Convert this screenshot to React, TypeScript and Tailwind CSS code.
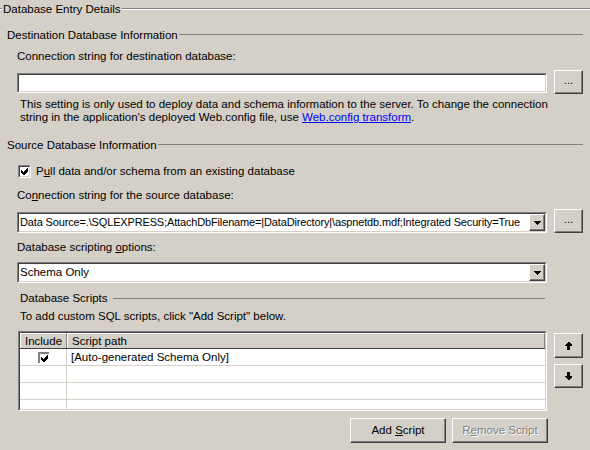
import React from "react";

const raised =
  "border border-t-white border-l-white border-r-[#404040] border-b-[#404040] shadow-[inset_-1px_-1px_0_#808080] bg-[#d4d0c8]";

function Sunken({ className = "", children }: { className?: string; children?: React.ReactNode }) {
  return (
    <div className={"border border-t-[#808080] border-l-[#808080] border-r-white border-b-white " + className}>
      <div className="w-full h-full border border-t-[#404040] border-l-[#404040] border-r-[#d4d0c8] border-b-[#d4d0c8] bg-white overflow-hidden">
        {children}
      </div>
    </div>
  );
}

function DotsButton({ className = "" }: { className?: string }) {
  return (
    <div className={raised + " w-[29px] flex items-center justify-center " + className}>
      <span className="leading-none -mt-[3px]">...</span>
    </div>
  );
}

function Combo({ text, tight = false }: { text: string; tight?: boolean }) {
  return (
    <Sunken className="w-[530px] h-[21px]">
      <div className="flex h-full">
        <div
          className={
            "flex-1 overflow-hidden whitespace-nowrap pl-[1px] flex items-center " +
            (tight ? "text-[11px] tracking-[-0.15px]" : "")
          }
        >
          {text}
        </div>
        <div className={raised + " w-[16px] h-full flex items-center justify-center"}>
          <svg width="7" height="4" viewBox="0 0 7 4" shapeRendering="crispEdges">
            <polygon points="0,0 7,0 4,4 3,4" fill="#000" />
          </svg>
        </div>
      </div>
    </Sunken>
  );
}

function Arrow({ up }: { up: boolean }) {
  return (
    <svg width="7" height="8" viewBox="0 0 7 8" shapeRendering="crispEdges" className={up ? "" : "rotate-180"}>
      <polygon points="3,0 4,0 7,3 7,4 5,4 5,8 2,8 2,4 0,4 0,3" fill="#000" />
    </svg>
  );
}

function Check() {
  return (
    <svg width="7" height="7" viewBox="0 0 7 7" shapeRendering="crispEdges">
      <polygon points="0,2 0,5 2,7 3,7 7,3 7,0 6,0 2,4 2,4 1,3 1,2" fill="#000" />
    </svg>
  );
}

export default function App() {
  return (
    <div className="w-[590px] h-[450px] bg-[#d4d0c8] overflow-hidden text-black text-[11.5px] leading-[13px] font-['Liberation_Sans',Arial,sans-serif]">
      {/* Title */}
      <div className="flex items-center h-[18px]">
        <div className="w-[2px] h-[2px] border-t border-b border-t-[#808080] border-b-white" />
        <span className="pl-[1px] pr-[1px]">Database Entry Details</span>
        <div className="flex-1 h-[2px] border-t border-b border-t-[#808080] border-b-white" />
      </div>

      {/* Destination */}
      <div className="ml-[7px] mr-[7px] mt-[9px]">
        <div className="flex items-center h-[17px]">
          <span className="pr-[1px]">Destination Database Information</span>
          <div className="flex-1 h-px bg-[#808080] -mt-[2px]" />
        </div>
        <div className="ml-[10px] mt-[4px] h-[16px] flex items-center">
          <span>
            Connection strin<u>g</u> for destination database:
          </span>
        </div>
        <div className="ml-[10px] mt-[6px] flex items-start gap-[7px] h-[24px]">
          <Sunken className="w-[530px] h-[20px] mt-[3px]" />
          <DotsButton className="h-[24px]" />
        </div>
        <div className="ml-[13px] mt-[4px] whitespace-nowrap">
          This setting is only used to deploy data and schema information to the server. To change the connection
          <br />
          string in the application's deployed Web.config file, use{" "}
          <span className="text-[#0000ff] underline">Web.config transform</span>.
        </div>
      </div>

      {/* Source */}
      <div className="ml-[7px] mr-[7px] mt-[13px]">
        <div className="flex items-center h-[17px]">
          <span className="pr-[1px]">Source Database Information</span>
          <div className="flex-1 h-px bg-[#808080] -mt-[2px]" />
        </div>
        <div className="ml-[11px] mt-[10px] h-[15px] flex items-center gap-[5px]">
          <Sunken className="w-[13px] h-[13px]">
            <div className="w-full h-full flex items-center justify-center">
              <Check />
            </div>
          </Sunken>
          <span>
            P<u>u</u>ll data and/or schema from an existing database
          </span>
        </div>
        <div className="ml-[10px] mt-[8px] h-[16px] flex items-center">
          <span>
            Co<u>n</u>nection string for the source database:
          </span>
        </div>
        <div className="ml-[10px] mt-[6px] flex items-start gap-[7px] h-[24px]">
          <div className="mt-[3px]">
            <Combo
              tight
              text="Data Source=.\SQLEXPRESS;AttachDbFilename=|DataDirectory|\aspnetdb.mdf;Integrated Security=True"
            />
          </div>
          <DotsButton className="h-[24px]" />
        </div>
        <div className="ml-[10px] mt-[6px] h-[16px] flex items-center">
          <span>
            Database scripting <u>o</u>ptions:
          </span>
        </div>
        <div className="ml-[10px] mt-[7px]">
          <Combo text="Schema Only" />
        </div>

        {/* Database Scripts */}
        <div className="ml-[13px] mr-[38px] mt-[7px] flex items-center h-[16px]">
          <span className="pr-[5px]">Database Scripts</span>
          <div className="flex-1 h-px bg-[#808080]" />
        </div>
        <div className="ml-[13px] mt-[2px] h-[16px] flex items-center">
          To add custom SQL scripts, click "Add Script" below.
        </div>

        <div className="ml-[11px] mt-[7px] flex items-start gap-[7px]">
          <Sunken className="w-[529px] h-[80px]">
            <div className="flex h-[16px] bg-[#d4d0c8] border-b border-b-[#404040]">
              <div className="w-[47px] border-t border-l border-t-white border-l-white border-r border-r-[#808080] flex items-center justify-center">
                Include
              </div>
              <div className="flex-1 border-t border-l border-t-white border-l-white border-r border-r-[#808080] flex items-center pl-[4px]">
                Script path
              </div>
            </div>
            {[0, 1, 2, 3].map((i) => (
              <div key={i} className="flex h-[17px] border-b border-b-[#d4d0c8]">
                <div className="w-[47px] border-r border-r-[#d4d0c8] flex items-center justify-center">
                  {i === 0 && (
                    <div className="w-[11px] h-[11px] border-t-2 border-l-2 border-t-[#808080] border-l-[#808080] bg-white flex items-center justify-center">
                      <Check />
                    </div>
                  )}
                </div>
                <div className="flex-1 flex items-center pl-[4px]">
                  {i === 0 ? "[Auto-generated Schema Only]" : ""}
                </div>
              </div>
            ))}
          </Sunken>
          <div className="flex flex-col">
            <div className={raised + " mt-[2px] w-[29px] h-[25px] flex items-center justify-center"}>
              <Arrow up />
            </div>
            <div className={raised + " mt-[6px] w-[29px] h-[24px] flex items-center justify-center"}>
              <Arrow up={false} />
            </div>
          </div>
        </div>

        <div className="mt-[7px] pr-[35px] flex justify-end gap-[6px]">
          <div className={raised + " w-[96px] h-[25px] flex items-center justify-center"}>
            <span>
              Add <u>S</u>cript
            </span>
          </div>
          <div className={raised + " w-[96px] h-[25px] flex items-center justify-center"}>
            <span className="text-[#808080] [text-shadow:1px_1px_0_#ffffff]">
              R<u>e</u>move Script
            </span>
          </div>
        </div>
      </div>
    </div>
  );
}
